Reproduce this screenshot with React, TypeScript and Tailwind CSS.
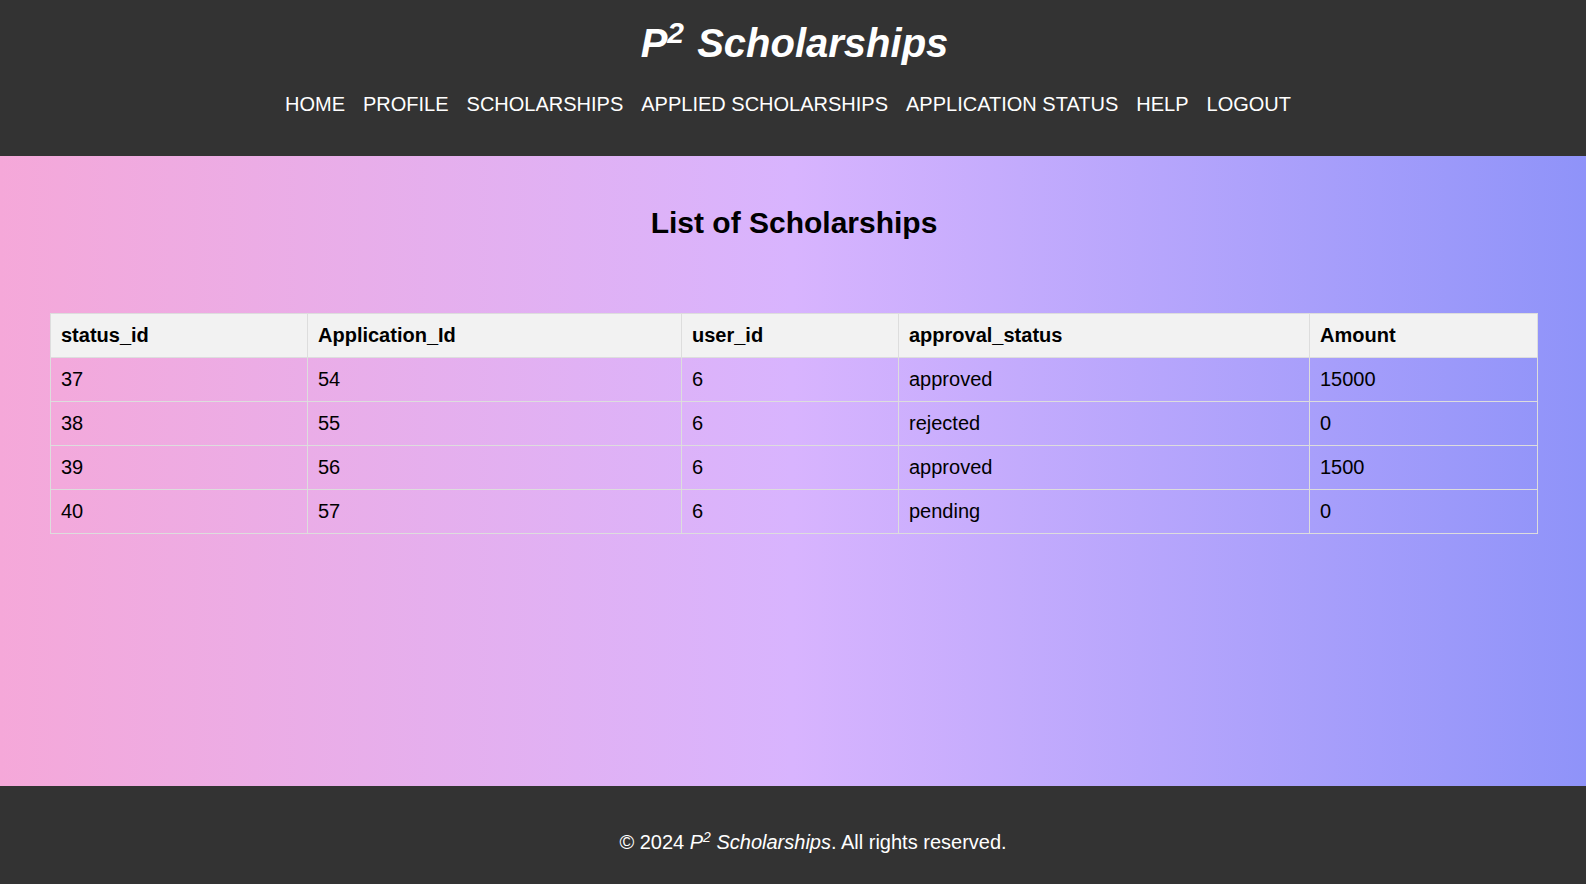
import React from "react";

const rows = [
  ["37", "54", "6", "approved", "15000"],
  ["38", "55", "6", "rejected", "0"],
  ["39", "56", "6", "approved", "1500"],
  ["40", "57", "6", "pending", "0"],
];

const headers = ["status_id", "Application_Id", "user_id", "approval_status", "Amount"];
const links = ["HOME", "PROFILE", "SCHOLARSHIPS", "APPLIED SCHOLARSHIPS", "APPLICATION STATUS", "HELP", "LOGOUT"];

export default function App() {
  return (
    <div
      className="min-h-screen flex flex-col text-[20px] text-black"
      style={{ fontFamily: '"Liberation Sans", Arial, sans-serif' }}
    >
      <header className="bg-[#333333] text-white h-[156px] pt-[20px] flex flex-col items-center">
        <h1 className="text-[40px] leading-[46px] font-bold italic m-0 pl-[3px]">
          P<sup className="text-[30px] leading-none relative top-[-2px] align-top mr-[2px]">2</sup> Scholarships
        </h1>
        <nav className="mt-[27px] flex gap-[18px] leading-[23px] pr-[10px]">
          {links.map((l) => (
            <a key={l} href="#" className="text-white">
              {l}
            </a>
          ))}
        </nav>
      </header>
      <main className="flex-1 bg-gradient-to-r from-[#f5a8d9] via-[#d8b4fe] to-[#8f93f9] pl-[50px] pr-[48px]">
        <h2 className="text-[30px] leading-[35px] font-bold text-center mt-[49px] mb-[73px]">
          List of Scholarships
        </h2>
        <table className="w-full table-fixed border-collapse">
          <colgroup>
            <col className="w-[257px]" />
            <col className="w-[374px]" />
            <col className="w-[217px]" />
            <col className="w-[411px]" />
            <col />
          </colgroup>
          <thead>
            <tr className="bg-[#f2f2f2]">
              {headers.map((h) => (
                <th key={h} className="border border-[#dddddd] px-[10px] py-[10px] text-left font-bold leading-[23px]">
                  {h}
                </th>
              ))}
            </tr>
          </thead>
          <tbody>
            {rows.map((r) => (
              <tr key={r[0]}>
                {r.map((c, i) => (
                  <td key={i} className="border border-[#dddddd] px-[10px] py-[10px] leading-[23px]">
                    {c}
                  </td>
                ))}
              </tr>
            ))}
          </tbody>
        </table>
      </main>
      <footer className="bg-[#333333] text-white h-[98px] pt-[45px] pl-[40px] text-center leading-[23px]">
        © 2024{" "}
        <i>
          P<sup className="text-[14px] leading-none relative top-[-1px] align-top">2</sup> Scholarships
        </i>
        . All rights reserved.
      </footer>
    </div>
  );
}
